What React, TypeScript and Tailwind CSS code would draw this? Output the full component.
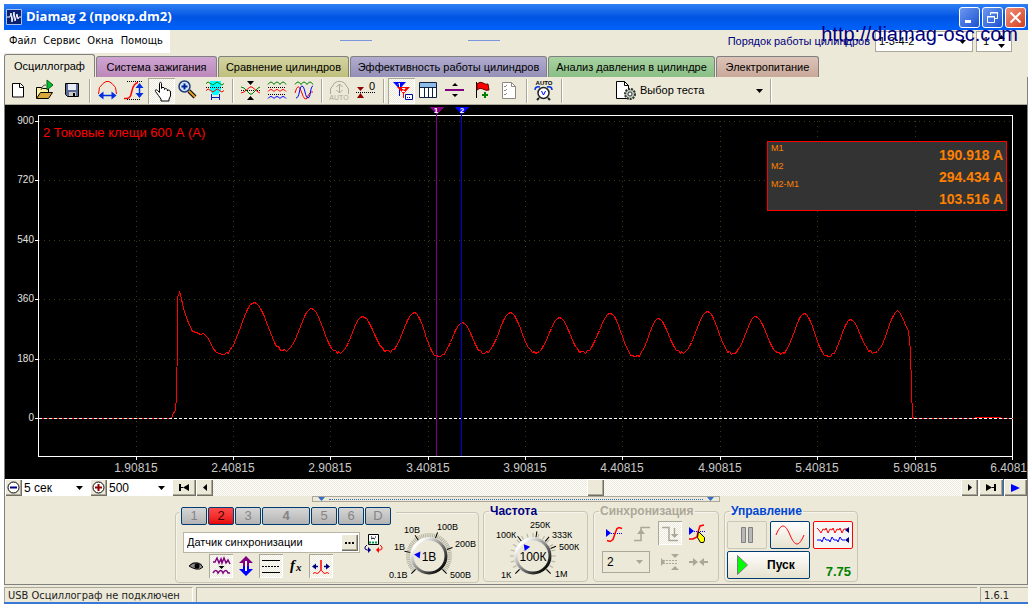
import { useState } from "react";
import type { ReactNode } from "react";

const TABS = [
  { name: "Осциллограф", style: "w-[91px] h-[23px] bg-[#ece9d8]" },
  { name: "Система зажигания", style: "w-[121px] h-[21px] bg-linear-to-b from-[#cfa5d3] to-[#ba88b9]" },
  { name: "Сравнение цилиндров", style: "w-[131px] h-[21px] bg-linear-to-b from-[#d3d3a2] to-[#bfbf7c]" },
  { name: "Эффективность работы цилиндров", style: "w-[197px] h-[21px] bg-linear-to-b from-[#b1accf] to-[#948fb6]" },
  { name: "Анализ давления в цилиндре", style: "w-[167px] h-[21px] bg-linear-to-b from-[#a9d2a3] to-[#8abf85]" },
  { name: "Электропитание", style: "w-[103px] h-[21px] bg-linear-to-b from-[#dcc3b8] to-[#c8a898]" },
];

/* Chart */

const ATTACK = [
  [39, 418], [170, 418], [172, 416], [173, 412], [175, 411], [176, 395], [177, 339], [177, 297],
  [179, 292], [180, 294], [183, 308], [187, 320], [192, 331], [196, 332], [200, 334], [203, 333],
  [208, 338], [212, 347], [216, 352],
];

// alternating low / high points of the current ripple
const RIPPLE = [
  [222, 354], [254, 302], [284, 350], [311, 308], [338, 352], [362, 316], [388, 351], [414, 312],
  [438, 356], [462, 322], [484, 352], [510, 312], [535, 352], [559, 317], [583, 352], [610, 313],
  [635, 356], [658, 318], [681, 352], [707, 311], [732, 353], [755, 316], [780, 353], [804, 313],
  [828, 356], [850, 319], [873, 352], [898, 310],
];

const RELEASE = [
  [900, 313], [904, 322], [908, 331], [910, 350], [911, 388], [912, 417], [914, 418], [974, 418],
  [976, 417], [999, 417], [1001, 418], [1012, 418],
];

const NOISE = [0, 1, -1, 0, 1, 0, -1];

function buildTrace() {
  const points = ATTACK.map((p) => p.join(","));
  for (let i = 0; i < RIPPLE.length - 1; i++) {
    const [x0, y0] = RIPPLE[i];
    const [x1, y1] = RIPPLE[i + 1];
    const low = Math.max(y0, y1);
    const high = Math.min(y0, y1);
    for (let x = x0; x < x1; x += 2) {
      const phase = (x - x0) / (x1 - x0);
      const rise = (1 - Math.cos(Math.PI * (y0 > y1 ? phase : 1 - phase))) / 2;
      const noise = rise < 0.25 ? NOISE[(x + i) % 7] : 0;
      points.push(`${x},${Math.round(low - (low - high) * Math.pow(rise, 1.25)) + noise}`);
    }
  }
  RELEASE.forEach((p) => points.push(p.join(",")));
  return points.join(" ");
}

const TRACE = buildTrace();
const COLUMNS = [136, 233, 330, 428, 525, 622, 720, 817, 915, 1012];
const ROWS = [121, 180, 240, 299, 359, 418];

function Chart() {
  return (
    <svg viewBox="5 105 1022 374" className="block w-full bg-black font-['Liberation_Sans',sans-serif]" shapeRendering="crispEdges">
      <g stroke="#3a3a14" strokeDasharray="1 4">
        {COLUMNS.slice(0, 9).map((x) => (
          <line key={x} x1={x + 0.5} y1={121} x2={x + 0.5} y2={456} />
        ))}
        {ROWS.slice(0, 5).map((y) => (
          <line key={y} x1={39} y1={y + 0.5} x2={1012} y2={y + 0.5} />
        ))}
      </g>
      <g stroke="#fff">
        <rect x="38.5" y="115.5" width="974" height="341" fill="none" />
        {COLUMNS.map((x) => (
          <line key={x} x1={x + 0.5} y1={457} x2={x + 0.5} y2={460} />
        ))}
        {ROWS.map((y) => (
          <line key={y} x1={35} y1={y + 0.5} x2={38} y2={y + 0.5} />
        ))}
      </g>
      <polyline points={TRACE} transform="translate(.5 .5)" fill="none" stroke="#f00" />
      <path d="M39 418.5H1012" stroke="#fff" strokeDasharray="3 2" />

      <path d="M436.5 108V456" stroke="#800080" />
      <path d="M429 107h15l-7 7h-1z" fill="#800080" />
      <path d="M461.5 108V456" stroke="#0000d8" />
      <path d="M454 107h15l-7 7h-1z" fill="#00f" />
      <g fill="#fff" fontSize="8" fontWeight="bold" textAnchor="middle">
        <text x="436" y="113">1</text>
        <text x="462" y="113">2</text>
      </g>

      <g fill="#e0e0e0" fontSize="10" textAnchor="end">
        {ROWS.map((y, i) => (
          <text key={y} x={34} y={y + 3}>{900 - i * 180}</text>
        ))}
      </g>
      <g fill="#c8c8c8" fontSize="12" textAnchor="middle">
        {COLUMNS.map((x, i) => (
          <text key={x} x={x} y={472}>{(1.90815 + i * 0.5).toFixed(5)}</text>
        ))}
      </g>
      <text x="43" y="137" fill="#f00" fontSize="13">2 Токовые клещи 600 А (А)</text>
    </svg>
  );
}

function Readout() {
  return (
    <div className="absolute right-[20px] top-[36px] flex w-[240px] h-[70px] justify-between border border-[#f00] bg-[#333] px-[3px] text-[#ff8000]">
      <div className="pt-px text-[9px] leading-[18px]">
        <div className="-mt-1">M1</div>
        <div>M2</div>
        <div>M2-M1</div>
      </div>
      <div className="pt-[2px] text-right text-[14px] font-bold leading-[22px]">
        <div>190.918 A</div>
        <div>294.434 A</div>
        <div>103.516 A</div>
      </div>
    </div>
  );
}

/* Toolbar */

const DITHER = "bg-[repeating-conic-gradient(#fff_0_25%,#ece9d8_0_50%)] [background-size:2px_2px]";
const PRESSED = `${DITHER} shadow-[inset_1px_1px_0_#aca899,inset_-1px_-1px_0_#fff]`;

function ToolButton({ label, pressed, children }: { label: string; pressed?: boolean; children: ReactNode }) {
  return (
    <button type="button" aria-label={label} className={`flex h-[26px] w-[27px] items-center justify-center ${pressed ? PRESSED : ""}`}>
      <svg width="25" height="25" viewBox="0 0 25 25" fill="none" aria-hidden="true">
        {children}
      </svg>
    </button>
  );
}

function Separator() {
  return (
    <div className="flex h-6 w-2 justify-center">
      <div className="w-[2px] border-l border-r border-l-[#aca899] border-r-white" />
    </div>
  );
}

function Toolbar() {
  return (
    <div className="flex h-7 items-center border-b border-[#aca899]">
      <ToolButton label="Новый">
        <path d="M6.5 5.5h8l3 3v10.5h-11z" fill="#fff" stroke="#000" />
        <path d="M13.5 5.5v4h4" stroke="#000" />
      </ToolButton>
      <ToolButton label="Открыть">
        <path d="M3.5 20V9.5h5l1 1h6v4" fill="#fff3a0" stroke="#000" />
        <path d="M3.5 20.5l4-6h12l-4 6z" fill="#d8a838" stroke="#000" />
        <path d="M8 12c1-4 3-5 5-5" stroke="#333" />
        <path d="M14 2l6 5-6 5z" fill="#00c030" stroke="#006010" />
      </ToolButton>
      <ToolButton label="Сохранить">
        <path d="M5.5 5.5h13v13h-11l-2-2z" fill="#5a6a90" stroke="#000" />
        <path d="M8 6h8v6H8z" fill="#e8ecf8" />
        <path d="M9 14h7v4H9z" fill="#ccc" />
        <path d="M13 15h2v3h-2z" fill="#000" />
      </ToolButton>
      <Separator />
      <ToolButton label="Масштаб по времени">
        <path d="M3.5 16L4.5 9.5 8 5.5 11 3.5h3l3 2 3.5 4 1 6.5" stroke="#f00" />
        <path d="M5 17.5h15" stroke="#0030e0" strokeWidth="1.5" />
        <path d="M3.5 17.5l5-4v8zM21.5 17.5l-5-4v8z" fill="#0030e0" />
      </ToolButton>
      <ToolButton label="Масштаб по амплитуде">
        <path d="M2 20.5h2c5 0 5-4 6-8s2-7 6-8" stroke="#f00" strokeWidth="1.5" />
        <path d="M5 3.5h16M5 21.5h13" stroke="#000" strokeDasharray="1 1" />
        <path d="M17.5 7v11" stroke="#0030e0" strokeWidth="1.5" />
        <path d="M17.5 5l4 5h-8zM17.5 20l4-5h-8z" fill="#0030e0" />
      </ToolButton>
      <ToolButton label="Рука" pressed>
        <path d="M9.5 17.5l-3-4c-1-2 1-2 2-1l2 2v-9c0-1.5 2-1.5 2 0v5c0-1.5 3-1.5 3 0v1c0-1.5 3-1 3 .5v1c0-1.5 3-1 3 1v4l-1.5 3v2h-8v-2z" fill="#fff" stroke="#000" />
      </ToolButton>
      <ToolButton label="Лупа">
        <path d="M13 13l6 6" stroke="#000" strokeWidth="4" />
        <path d="M13 13l6 6" stroke="#e8a020" strokeWidth="2" />
        <circle cx="8.5" cy="8.5" r="5.5" fill="#cfe6ff" stroke="#223c78" strokeWidth="1.5" />
        <path d="M5.5 8.5h6M8.5 5.5v6" stroke="#002090" strokeWidth="2" />
      </ToolButton>
      <ToolButton label="Область">
        <path d="M7 3h11v9l-3 5H10l-3-5z" fill="#0ff" />
        <path d="M3 5.5q2-3 4.5 0t4.5 0 4.5 0 4.5 0" stroke="#008000" />
        <path d="M3 9.5h18" stroke="#000" strokeDasharray="1 1" />
        <path d="M3 12.5q2-3 4.5 0t4.5 0 4.5 0 4.5 0" stroke="#f00" />
        <path d="M8.5 16v6M16.5 16v6M9 19.5h7" stroke="#0020c0" />
      </ToolButton>
      <Separator />
      <ToolButton label="Совместить">
        <path d="M3 12.5h19" stroke="#000" strokeDasharray="1 1" />
        <path d="M3 15l3-1 6-5h2l6 5 2 1" stroke="#f00" />
        <path d="M3 9l3 1 6 6h2l6-6 2-1" stroke="#008000" />
        <path d="M9 3h7l-3.5 4zM9 22h7l-3.5-4z" fill="#000" />
      </ToolButton>
      <ToolButton label="Разнести">
        <path d="M3 6.5q3-5 6 0 3-5 6 0 3-5 6 0" stroke="#008000" />
        <path d="M3 9.5h18M3 16.5h18" stroke="#000" strokeDasharray="1 1" />
        <path d="M3 13.5q3-4 6 0 3-4 6 0 3-4 6 0" stroke="#f00" />
        <path d="M3 20.5q3-4 6 0 3-4 6 0 3-4 6 0" stroke="#00f" />
      </ToolButton>
      <ToolButton label="Наложить">
        <path d="M3 6.5q3-5 6 0 3-5 6 0 3-5 6 0" stroke="#008000" />
        <path d="M3 15q3-12 6.5-1t6 5 5.5-5" stroke="#f00" />
        <path d="M4 20c4 0 3-12 6-12s3 12 6 12 2-12 5-12" stroke="#00f" />
      </ToolButton>
      <Separator />
      <ToolButton label="Авто">
        <g stroke="#aca899">
          <path d="M3.5 16V11l4-6 3-1.5h4l3 1.5 4 6v5M12.5 6v9M9.5 9l3-3 3 3M9.5 12l3 3 3-3" />
        </g>
        <text x="12" y="22" fontSize="7" textAnchor="middle" fill="#aca899">AUTO</text>
      </ToolButton>
      <ToolButton label="Ноль">
        <path d="M3 9h7l-3.5 4zM3 20h7l-3.5-5z" fill="#900000" />
        <path d="M2 14.5h19" stroke="#000" strokeDasharray="1 1" />
        <text x="15" y="12" fontSize="11" fill="#000">0</text>
      </ToolButton>
      <Separator />
      <ToolButton label="Маркеры" pressed>
        <path d="M4 4h13l-6.5 7z" fill="#00f" />
        <path d="M10.5 4v14" stroke="#00f" />
        <path d="M8 9h13l-6.5 7z" fill="#f00" />
        <path d="M14.5 12v8" stroke="#f00" />
        <path d="M10.5 5v4M9 6.5l1.5-1.5M13 10.5h3l-3 3h3" stroke="#fff" />
        <path d="M16.5 16.5h7v5h-7z" fill="#fff" stroke="#0010a0" />
        <path d="M18 19.5h4" stroke="#0010a0" strokeDasharray="1 1" />
      </ToolButton>
      <ToolButton label="Таблица">
        <path d="M3.5 4.5h17v15h-17z" fill="#fff" stroke="#102040" />
        <path d="M4 5h16v4H4z" fill="#8ebbe8" />
        <path d="M3 9.5h18M8.5 9v10M12.5 9v10M16.5 9v10" stroke="#102040" />
      </ToolButton>
      <ToolButton label="Линия">
        <path d="M2 12h19" stroke="#800080" strokeWidth="2" />
        <path d="M9 8h6l-3-3zM9 16h6l-3 3z" fill="#000" />
      </ToolButton>
      <ToolButton label="Флаг">
        <path d="M6.5 4v16" stroke="#000" />
        <path d="M7 6q3-3 6-1t5 1l1 6q-3 1-6-1t-6 1z" fill="#f00" stroke="#600" />
        <path d="M12 17h6M15 14v6" stroke="#008000" strokeWidth="2" />
      </ToolButton>
      <ToolButton label="Список">
        <path d="M5.5 4.5h9l4 4v12h-13z" fill="#fff" stroke="#8c8a80" />
        <path d="M14.5 4.5v4h4M7 8l1 1 2-2M7 12l1 1 2-2M7 16l1 1 2-2" stroke="#8c8a80" />
      </ToolButton>
      <Separator />
      <ToolButton label="Автонастройка">
        <text x="12" y="7" fontSize="6" fontWeight="bold" textAnchor="middle" fill="#000">AUTO</text>
        <path d="M3 12q0-4 5-3M20 12q0-4-5-3" stroke="#0030e0" strokeWidth="1.5" />
        <circle cx="11.5" cy="15" r="5.5" fill="#fff" stroke="#222" strokeWidth="1.5" />
        <path d="M9.5 13l2 4 2-4" stroke="#00f" />
        <path d="M7 20l-2 2M16 20l2 2" stroke="#222" strokeWidth="2" />
      </ToolButton>
      <Separator />
      <label className="flex h-6 w-[201px] items-center pl-[50px] text-[11px]">
        <svg width="21" height="22" viewBox="0 0 21 22" fill="none" aria-hidden="true">
          <path d="M.5 1.5h8l4 4v13H.5z" fill="#fff" stroke="#000" />
          <path d="M8.5 1.5v4h4" stroke="#000" />
          <circle cx="14" cy="14" r="5" fill="#b8c8b8" stroke="#333" strokeWidth="2" strokeDasharray="2 1" />
          <circle cx="14" cy="14" r="2" fill="#fff" stroke="#333" />
        </svg>
        <select aria-label="Выбор теста" className="ml-[3px] h-5 min-w-0 flex-1 appearance-none">
          <option>Выбор теста</option>
        </select>
        <Triangle className="mr-1" />
      </label>
      <Separator />
    </div>
  );
}

function Triangle({ className = "", color = "#000" }: { className?: string; color?: string }) {
  return (
    <svg width="7" height="4" viewBox="0 0 7 4" className={`pointer-events-none shrink-0 ${className}`} aria-hidden="true">
      <path d="M0 0h7L3.5 4z" fill={color} />
    </svg>
  );
}

/* Scroll row under the chart */

const RAISED = "flex items-center justify-center bg-[#ece9d8] shadow-[inset_1px_1px_0_#fff,inset_-1px_-1px_0_#716f64,inset_-2px_-2px_0_#aca899]";

function ScrollRow() {
  return (
    <div className={`flex h-[17px] text-[12px] ${DITHER}`}>
      <button type="button" aria-label="Уменьшить время" className={`${RAISED} w-[17px]`}>
        <svg width="13" height="13" viewBox="0 0 13 13">
          <circle cx="6.5" cy="6.5" r="5.5" fill="#fff" stroke="#000" />
          <path d="M3 6.5h7" stroke="#000080" strokeWidth="2" />
        </svg>
      </button>
      <div className="flex w-[68px] items-center bg-white pr-[7px]">
        <select aria-label="Развёртка" className="h-4 min-w-0 flex-1 appearance-none pl-[2px] leading-4">
          <option>5 сек</option>
        </select>
        <Triangle />
      </div>
      <button type="button" aria-label="Увеличить" className={`${RAISED} w-[17px]`}>
        <svg width="13" height="13" viewBox="0 0 13 13">
          <circle cx="6.5" cy="6.5" r="5.5" fill="#fff" stroke="#000" />
          <path d="M3 6.5h7M6.5 3v7" stroke="#900000" strokeWidth="2" />
        </svg>
      </button>
      <div className="flex w-[65px] items-center bg-white pr-[7px]">
        <select aria-label="Масштаб" className="h-4 min-w-0 flex-1 appearance-none pl-[2px] leading-4">
          <option>500</option>
        </select>
        <Triangle />
      </div>
      <button type="button" aria-label="В начало" className={`${RAISED} w-[24px]`}>
        <svg width="10" height="7" viewBox="0 0 10 7"><path d="M0 0h2v7H0zM2 3h2v1H2zM10 0v7L4 3.5z" /></svg>
      </button>
      <button type="button" aria-label="Назад" className={`${RAISED} w-[17px]`}>
        <svg width="4" height="7" viewBox="0 0 4 7"><path d="M4 0v7L0 3.5z" /></svg>
      </button>
      <div className="flex flex-1">
        <div className="w-[50%]" />
        <div className={`${RAISED} w-[17px]`} />
      </div>
      <button type="button" aria-label="Вперёд" className={`${RAISED} w-[17px]`}>
        <svg width="4" height="7" viewBox="0 0 4 7"><path d="M0 0v7l4-3.5z" /></svg>
      </button>
      <button type="button" aria-label="В конец" className={`${RAISED} ml-px w-[24px]`}>
        <svg width="10" height="7" viewBox="0 0 10 7"><path d="M8 0h2v7H8zM6 3h2v1H6zM0 0v7l6-3.5z" /></svg>
      </button>
      <button type="button" aria-label="Воспроизвести" className={`${RAISED} w-[24px] border-l border-[#316ac5]`}>
        <svg width="9" height="8" viewBox="0 0 9 8"><path d="M0 0v8l9-4z" fill="#00f" /></svg>
      </button>
    </div>
  );
}

function Splitter() {
  return (
    <div className="mx-auto flex h-[6px] w-[40%] items-center gap-1 border border-[#aca899] px-[5px]">
      <Triangle color="#316ac5" />
      <div className="flex-1 border-t border-dotted border-[#316ac5]" />
      <Triangle color="#316ac5" />
    </div>
  );
}

/* Control panel */

const GROUP = "rounded-[4px] border border-[#c9c6b6] shadow-[inset_1px_1px_0_#f6f4ec]";

type Mark = { text: string; x: number; y: number; angle: number };

const VOLT_MARKS: Mark[] = [
  { text: "0.1В", x: 4, y: 63, angle: 225 },
  { text: "1В", x: 9, y: 35, angle: 281 },
  { text: "10В", x: 19, y: 18, angle: 326 },
  { text: "100В", x: 52, y: 15, angle: 20 },
  { text: "200В", x: 70, y: 32, angle: 70 },
  { text: "500В", x: 65, y: 63, angle: 135 },
];

const FREQ_MARKS: Mark[] = [
  { text: "1К", x: 12, y: 63, angle: 225 },
  { text: "100К", x: 7, y: 23, angle: 322 },
  { text: "250К", x: 41, y: 13, angle: 9 },
  { text: "333К", x: 63, y: 23, angle: 40 },
  { text: "500К", x: 70, y: 35, angle: 67 },
  { text: "1М", x: 66, y: 62, angle: 135 },
];

function Dial({ value, marks, pointer, minor }: { value: string; marks: Mark[]; pointer: number; minor: number }) {
  const ticks = Array.from({ length: Math.floor(270 / minor) + 1 }, (_, i) => 225 + i * minor);
  return (
    <svg width="94" height="67" viewBox="0 0 94 67" className="shrink-0" role="img" aria-label={value}>
      <defs>
        <linearGradient id="rim" x1="0" y1="0" x2="1" y2="1">
          <stop offset="0.15" stopColor="#fff" />
          <stop offset="0.5" stopColor="#8a8a8a" />
          <stop offset="0.9" stopColor="#000" />
        </linearGradient>
      </defs>
      <g stroke="#b3b09f">
        {ticks.map((a) => (
          <path key={a} d="M44 18v4" transform={`rotate(${a} 44 41)`} />
        ))}
      </g>
      <g stroke="#000">
        {marks.map((m) => (
          <path key={m.text} d="M44 16v6" transform={`rotate(${m.angle} 44 41)`} />
        ))}
      </g>
      <circle cx="44" cy="41" r="17" fill="#ece9d8" stroke="url(#rim)" strokeWidth="3" />
      <path d="M44 26l3.5 6h-7z" fill="#00f" transform={`rotate(${pointer} 44 41)`} />
      <text x="44" y="46" fontSize="12" textAnchor="middle">{value}</text>
      <g fontSize="9">
        {marks.map((m) => (
          <text key={m.text} x={m.x} y={m.y}>{m.text}</text>
        ))}
      </g>
    </svg>
  );
}

const CHANNELS = ["1", "2", "3", "4", "5", "6", "D"];

function IconButton({ label, pressed, children }: { label: string; pressed?: boolean; children: ReactNode }) {
  return (
    <button type="button" aria-label={label} className={`flex h-6 w-6 items-center justify-center ${pressed ? PRESSED : ""}`}>
      <svg width="20" height="20" viewBox="0 0 20 20" fill="none" aria-hidden="true">
        {children}
      </svg>
    </button>
  );
}

function ChannelPanel() {
  const [active, setActive] = useState("2");

  return (
    <div className={`${GROUP} mt-2 flex h-[71px] w-[304px]`}>
      <div className="ml-[3px] w-[217px] shrink-0">
        <div className="-mt-[6px] flex h-[18px] gap-px bg-[#ece9d8] pl-[2px]">
          {CHANNELS.map((c) => (
            <button
              key={c}
              type="button"
              onClick={() => setActive(c)}
              className={`rounded-[2px] border border-[#003c74] text-[13px] leading-4 ${c === "4" ? "w-[48px] font-bold" : "w-[26px]"} ${
                c === active
                  ? "bg-linear-to-b from-[#ff4a4a] to-[#e60000] text-[#400000]"
                  : "bg-linear-to-b from-[#d6d6d6] to-[#b4b4b4] text-[#858585]"
              }`}
            >
              {c}
            </button>
          ))}
        </div>
        <div className="mt-[7px] flex h-[21px] items-center gap-1">
          <div className="ml-1 flex h-[21px] w-[177px] border border-[#b8b5a5] bg-white p-px">
            <input aria-label="Датчик" defaultValue="Датчик синхронизации" className="min-w-0 flex-1 pl-[2px] text-[11px] outline-none" />
            <button type="button" aria-label="Выбрать датчик" className={`${RAISED} w-[17px]`}>
              <svg width="9" height="2" viewBox="0 0 9 2"><path d="M0 0h2v2H0zM3.5 0h2v2h-2zM7 0h2v2H7z" /></svg>
            </button>
          </div>
          <svg width="19" height="20" viewBox="0 0 19 20" fill="none" aria-hidden="true">
            <path d="M4.5 1.5h10v10h-10z" fill="#fff" stroke="#000" />
            <path d="M5 9.5h9" stroke="#00a040" strokeWidth="2" strokeDasharray="2 1" />
            <path d="M7 4h1M11 4h1M7 6l2-1 2 1" stroke="#000" />
            <path d="M3 12l-2 2v2l2 1h2" stroke="#000080" />
            <path d="M4 14l3 3-3 3z" fill="#000080" />
            <path d="M16 12l2 2v2l-2 1h-2" stroke="#f00" />
            <path d="M15 14l-3 3 3 3z" fill="#f00" />
          </svg>
        </div>
        <div className="flex items-center gap-px pl-[5px] pt-px">
          <IconButton label="Показать">
            <path d="M4 8q6-4 12 0v3q-5 4-9 1l-3-2z" fill="#888" />
            <path d="M3 10q4-4 8-3t6 4q-3 3-7 2t-7-3z" stroke="#000" />
            <circle cx="11" cy="10" r="2.5" fill="#000" />
          </IconButton>
          <IconButton label="Фильтр" pressed>
            <path d="M2 6l2 0 2-4 2 5 2-4 1 4 2-5 2 5 2-3 2 4M2 17q3-5 5 0 3-5 5 0 3-5 5 0h2" stroke="#800080" strokeWidth="1.5" />
            <path d="M7.5 10h6l-3 3z" fill="#000" />
          </IconButton>
          <IconButton label="Инвертировать">
            <path d="M10 0l7 7h-4v3H7V7H3z" fill="#800080" />
            <path d="M10 20l7-7h-4v-3H7v3H3z" fill="#00f" />
            <path d="M10 5v10" stroke="#fff" strokeWidth="2" />
          </IconButton>
          <IconButton label="Уровни" pressed>
            <path d="M1 4.5h18M1 16.5h18" stroke="#000" />
            <path d="M1 10.5h18" stroke="#000" strokeDasharray="2 1" />
          </IconButton>
          <IconButton label="Функция">
            <text x="4" y="14" fontSize="15" fontStyle="italic" fontWeight="bold" fill="#000" fontFamily="Liberation Serif">f</text>
            <text x="10" y="15" fontSize="11" fontStyle="italic" fontWeight="bold" fill="#000" fontFamily="Liberation Serif">x</text>
          </IconButton>
          <IconButton label="Сдвиг" pressed>
            <path d="M3 10.5h4M17 10.5h-4" stroke="#000080" strokeWidth="1.5" />
            <path d="M1 10.5l4-3v6zM19 10.5l-4-3v6z" fill="#000080" />
            <path d="M2 17.5l2-1 2 1 2-1 2-3V4v9.5l2 3 2 1 2-1 2 1" stroke="#f00" />
          </IconButton>
        </div>
      </div>
      <div className="-ml-[11px] pt-[2px]">
        <Dial value="1В" marks={VOLT_MARKS} pointer={276} minor={5} />
      </div>
    </div>
  );
}

function Group({ title, color, width, children }: { title: string; color: string; width: string; children: ReactNode }) {
  return (
    <fieldset className={`${GROUP} h-[78px] ${width}`}>
      <legend className={`ml-[5px] h-[14px] px-px text-[12px] font-bold leading-[14px] ${color}`}>{title}</legend>
      {children}
    </fieldset>
  );
}

function SyncPanel() {
  return (
    <Group title="Синхронизация" color="text-[#aca899]" width="w-[126px]">
      <div className="flex items-center justify-between px-2 pt-[3px]">
        <IconButton label="Синхронизация">
          <path d="M2 6v8l5-4z" fill="#00f" />
          <path d="M3 10.5h15" stroke="#00f" strokeDasharray="1 1" />
          <path d="M3 17.5l3 1 3-2 2-6 2-5 2-1 3 1" stroke="#f00" strokeWidth="1.5" />
        </IconButton>
        <IconButton label="По фронту">
          <path d="M2 17.5h7v-13h9" stroke="#aca899" strokeWidth="1.5" />
          <path d="M9 6l4 5H5z" fill="#aca899" />
        </IconButton>
        <IconButton label="По спаду" pressed>
          <path d="M2 4.5h7v13h9M14.5 5v8" stroke="#aca899" strokeWidth="1.5" />
          <path d="M14.5 15l4-4h-8z" fill="#aca899" />
        </IconButton>
        <IconButton label="Выбрать уровень">
          <path d="M1 4v8l5-4z" fill="#00f" />
          <path d="M2 8.5h16" stroke="#00f" strokeDasharray="1 1" />
          <path d="M1 16h4l4-2 1-5 2-6 4-1" stroke="#f00" strokeWidth="1.5" />
          <path d="M10.5 8.5l6 6v3l-1 2h-3l-3-5z" fill="#ff0" stroke="#000" />
        </IconButton>
      </div>
      <div className="mt-[5px] flex items-center pl-2">
        <div className="mr-2 flex h-[22px] w-[48px] items-center border border-[#aca899] pr-[6px]">
          <select aria-label="Канал синхронизации" className="min-w-0 flex-1 appearance-none pl-1 text-[12px] leading-5">
            <option>2</option>
          </select>
          <Triangle color="#aca899" />
        </div>
        <IconButton label="Уровень">
          <path d="M1 6v8l4-4zM11 2h8l-4 4zM11 18h8l-4-4z" fill="#aca899" />
          <path d="M3 8.5h15M3 11.5h15" stroke="#aca899" strokeDasharray="2 1" />
        </IconButton>
        <div className="ml-1">
          <IconButton label="Сжать">
            <path d="M1 9h4V6l5 4-5 4v-3H1zM20 9h-4V6l-5 4 5 4v-3h4z" fill="#aca899" />
          </IconButton>
        </div>
      </div>
    </Group>
  );
}

function ControlPanel() {
  return (
    <Group title="Управление" color="text-[#0046d5]" width="w-[134px]">
      <div className="flex flex-wrap gap-x-[3px] gap-y-[2px] px-[2px] pt-[3px]">
        <button type="button" aria-label="Пауза" className="flex h-7 w-10 items-center justify-center rounded-[2px] border border-[#c9c7ba]">
          <svg width="12" height="16" viewBox="0 0 12 16"><path d="M.5.5h4v15h-4zM7.5.5h4v15h-4z" fill="#b8b8b8" stroke="#808080" /></svg>
        </button>
        <button type="button" aria-label="Синус" className="flex h-7 w-10 items-center justify-center rounded-[2px] border border-[#003c74] bg-linear-to-b from-white to-[#e6e2cf]">
          <svg width="30" height="20" viewBox="0 0 30 20"><path d="M1 10C6-2 10-2 15 10s9 12 14 0" fill="none" stroke="#f00" /></svg>
        </button>
        <button type="button" aria-label="Самописец" className="flex h-7 w-10 items-center justify-center rounded-[2px] border border-[#f00] bg-[#f6f6f6]">
          <svg width="34" height="20" viewBox="0 0 34 20" fill="none">
            <path d="M1 3l2 2 2 3 2-4 2 1 1-2 2 5 2-4 2 1 1-2 2 5 2-4 2 1 1-2 2 5 2-4h3" stroke="#f00" />
            <path d="M1 15h4l1 2 2-5 2 3h3l1 2 2-5 2 3h3l1 2 2-5 2 3h3" stroke="#00f" />
            <path d="M33 2v6l-4-3zM33 12v6l-4-3z" fill="#000080" />
          </svg>
        </button>
        <button type="button" className="flex h-7 w-[83px] items-center rounded-[2px] border border-[#003c74] bg-linear-to-b from-white to-[#e6e2cf] pl-[9px] text-[12px] font-bold">
          <svg width="11" height="20" viewBox="0 0 11 20"><path d="M.5.5v19L10.5 10z" fill="#0f0" stroke="#7a7a7a" /></svg>
          <span className="ml-[19px]">Пуск</span>
        </button>
        <output className="flex-1 self-end pr-1 text-right text-[13px] font-bold leading-[14px] text-[#008000]">7.75</output>
      </div>
    </Group>
  );
}

/* Window */

const CAPTION = "flex h-[21px] w-[21px] items-center justify-center rounded-[3px] border border-white";

function TitleBar() {
  return (
    <header className="flex h-[26px] items-center bg-linear-to-b from-[#2f80f4] via-[#0054e3] to-[#0062fb] pl-[2px] pr-[2px]">
      <svg width="16" height="16" viewBox="0 0 16 16" aria-hidden="true">
        <path d="M.5.5h15v15H.5z" fill="#0a2070" stroke="#a8c0f0" />
        <path d="M1 8h3l1-4 1 9 2-10 1 9 2-7 1 5 1-2h2" fill="none" stroke="#fff" />
      </svg>
      <h1 className="ml-1 flex-1 font-['Open_Sans',sans-serif] text-[13px] font-bold text-white">Diamag 2 (прокр.dm2)</h1>
      <div className="flex gap-[2px]">
        <button type="button" aria-label="Свернуть" className={`${CAPTION} bg-linear-to-br from-[#6c98f0] to-[#1b50d0]`}>
          <svg width="13" height="13" viewBox="0 0 13 13"><path d="M2 9h6v3H2z" fill="#fff" /></svg>
        </button>
        <button type="button" aria-label="Восстановить" className={`${CAPTION} bg-linear-to-br from-[#6c98f0] to-[#1b50d0]`}>
          <svg width="13" height="13" viewBox="0 0 13 13" fill="none" stroke="#fff"><path d="M4.5 4V1.5h7v6H9M4 2h8M1.5 5.5h7v6h-7zM1 6h8" /></svg>
        </button>
        <button type="button" aria-label="Закрыть" className={`${CAPTION} bg-linear-to-br from-[#f0907a] to-[#d03c18]`}>
          <svg width="13" height="13" viewBox="0 0 13 13"><path d="M1.5 1.5l10 10M11.5 1.5l-10 10" stroke="#fff" strokeWidth="2" /></svg>
        </button>
      </div>
    </header>
  );
}

function MenuRow() {
  return (
    <div className="flex h-6 items-start">
      <nav className="flex h-[23px] w-[166px] items-center gap-[7px] bg-white pl-[5px] font-['DejaVu_Sans_Condensed','DejaVu_Sans',sans-serif] text-[11px]">
        <button type="button">Файл</button>
        <button type="button">Сервис</button>
        <button type="button">Окна</button>
        <button type="button">Помощь</button>
      </nav>
      <div className="ml-[170px] mt-[10px] w-8 border-t border-[#7a96df]" />
      <div className="ml-24 mt-[10px] w-8 border-t border-[#7a96df]" />
      <div className="ml-auto mt-px flex h-[21px] items-center pr-4 text-[11px]">
        <label htmlFor="order" className="mr-[5px] text-[#000080]">Порядок работы цилиндров</label>
        <div className="flex h-[21px] w-[98px] items-center border border-[#aca899] bg-white pr-[6px]">
          <select id="order" className="min-w-0 flex-1 appearance-none pl-[3px]">
            <option>1-3-4-2</option>
          </select>
          <Triangle />
        </div>
        <div className="ml-[3px] flex h-[21px] w-[36px] items-center border border-[#aca899] bg-white pr-[6px]">
          <input aria-label="Цилиндр" defaultValue="1" className="min-w-0 flex-1 pl-[6px] outline-none" />
          <div className="flex flex-col gap-[5px]">
            <Triangle className="rotate-180" />
            <Triangle />
          </div>
        </div>
      </div>
    </div>
  );
}

function StatusBar() {
  const cell = "border-l border-t border-[#aca899] pl-[3px]";
  return (
    <footer className="mt-[2px] flex h-[17px] gap-[3px] border-b-2 border-[#3a78d8] font-['DejaVu_Sans_Condensed','DejaVu_Sans',sans-serif] text-[11px] leading-[15px] text-[#222]">
      <div className={`${cell} w-[189px] whitespace-nowrap border-r border-r-white`}>USB Осциллограф не подключен</div>
      <div className={`${cell} flex-1`} />
      <div className={`${cell} w-[48px]`}>1.6.1</div>
    </footer>
  );
}

export default function App() {
  const [tab, setTab] = useState("Осциллограф");

  return (
    <div className="bg-white p-1 font-['Liberation_Sans',Arial,sans-serif] text-black">
      <div className="relative bg-[#ece9d8]">
        <TitleBar />
        <MenuRow />
        <a href="http://diamag-osc.com" className="absolute right-[10px] top-[18px] text-[20px] leading-6 text-[#000080]">
          http://diamag-osc.com
        </a>

        <div className="flex h-[23px] items-end gap-px" role="tablist">
          {TABS.map((t) => (
            <button
              key={t.name}
              type="button"
              role="tab"
              aria-selected={t.name === tab}
              onClick={() => setTab(t.name)}
              className={`whitespace-nowrap rounded-t-[3px] border border-b-0 border-[#808080] text-[11px] ${t.style}`}
            >
              {t.name}
            </button>
          ))}
        </div>

        <main className="border border-t-0 border-[#808080]">
          <Toolbar />
          <div className="relative">
            <Chart />
            <Readout />
          </div>
          <ScrollRow />
          <Splitter />
          <div className="flex items-start pb-px pl-[170px] pt-[2px]">
            <ChannelPanel />
            <div className="ml-1 flex gap-[5px]">
              <Group title="Частота" color="text-[#000080]" width="w-[105px]">
                <div className="-mt-[3px] ml-[5px]">
                  <Dial value="100К" marks={FREQ_MARKS} pointer={322} minor={15} />
                </div>
              </Group>
              <SyncPanel />
              <ControlPanel />
            </div>
          </div>
        </main>
        <StatusBar />
      </div>
    </div>
  );
}
